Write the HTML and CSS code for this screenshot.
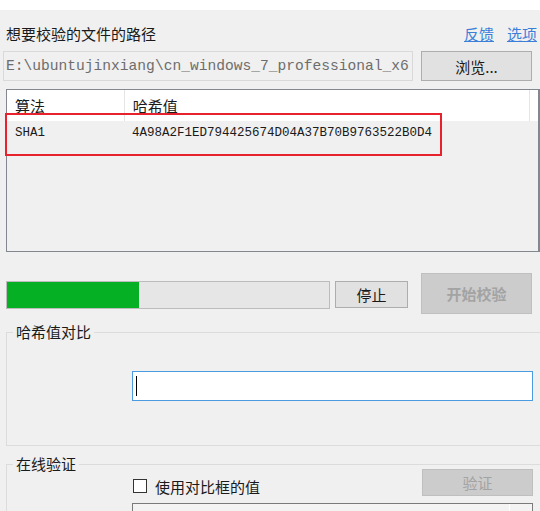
FILE: index.html
```html
<!DOCTYPE html>
<html lang="zh-CN">
<head>
  <meta charset="UTF-8">
  <title>哈希校验</title>
  <link rel="stylesheet" href="styles.css">
</head>
<body>

  <div class="topbar"></div>

  <div class="head-row">
    <span class="title">想要校验的文件的路径</span>
    <div class="links">
      <a href="#" class="link">反馈</a>
      <a href="#" class="link">选项</a>
    </div>
  </div>

  <div class="path-row">
    <div class="path-box">E:\ubuntujinxiang\cn_windows_7_professional_x6</div>
    <button class="btn browse-btn">浏览...</button>
  </div>

  <div class="list">
    <div class="list-head">
      <div class="col col-algo">算法</div>
      <div class="col col-hash">哈希值</div>
      <div class="col col-rest"></div>
    </div>
    <div class="list-row">
      <div class="cell cell-algo">SHA1</div>
      <div class="cell cell-hash">4A98A2F1ED794425674D04A37B70B9763522B0D4</div>
    </div>
    <div class="mark"></div>
  </div>

  <div class="run-row">
    <div class="progress">
      <div class="progress-fill" style="width: 41%"></div>
    </div>
    <button class="btn stop-btn">停止</button>
    <button class="btn start-btn" disabled>开始校验</button>
  </div>

  <div class="group group-compare">
    <div class="group-title">哈希值对比</div>
    <div class="hash-input"><span class="caret"></span></div>
  </div>

  <div class="group group-online">
    <div class="group-title">在线验证</div>
    <div class="check-row">
      <label class="check">
        <span class="check-box"></span>
        使用对比框的值
      </label>
      <button class="btn verify-btn" disabled>验证</button>
    </div>
    <div class="online-box"><span class="online-split"></span></div>
  </div>

</body>
</html>
```

FILE: styles.css
```css
html, body {
  margin: 0;
  padding: 0;
  height: 100%;
  overflow: hidden;
  background: #f0f0f0;
  font-family: "Noto Sans CJK SC", "Liberation Sans", sans-serif;
  font-size: 15px;
  color: #1a1a1a;
}

.topbar {
  height: 10px;
  background: white;
}

.head-row {
  display: flex;
  justify-content: space-between;
  align-items: center;
  height: 20px;
  margin-top: 14px;
  padding: 0 3px 0 6px;
  line-height: 20px;
}

.links {
  display: flex;
  gap: 13px;
}

.link {
  color: #3b7fd8;
  text-decoration: underline;
}

.path-row {
  display: flex;
  height: 30px;
  margin-top: 7px;
  padding-left: 3px;
}

.path-box {
  width: 410px;
  box-sizing: border-box;
  border: 1px solid #d9d9d9;
  background: #f0f0f0;
  color: #6d6d6d;
  font-family: "Liberation Mono", monospace;
  font-size: 14.6px;
  line-height: 28px;
  padding-left: 2px;
  white-space: nowrap;
  overflow: hidden;
}

.btn {
  box-sizing: border-box;
  border: 1px solid #adadad;
  background: #e1e1e1;
  font-family: "Noto Sans CJK SC", "Liberation Sans", sans-serif;
  font-size: 15px;
  color: #1a1a1a;
  padding: 0;
  line-height: 1;
}

.btn:disabled {
  background: #cccccc;
  border-color: #bfbfbf;
  color: #a3a3a3;
}

.browse-btn {
  width: 111px;
  margin-left: 8px;
}

.list {
  position: relative;
  width: 534px;
  height: 163px;
  box-sizing: border-box;
  margin: 8px 0 0 6px;
  border: 1px solid #828790;
  border-right-width: 2px;
}

.list-head {
  display: flex;
  height: 31px;
  background: white;
}

.col {
  line-height: 31px;
  padding-left: 8px;
  box-sizing: border-box;
}

.col-algo {
  width: 118px;
  border-right: 1px solid #e5e5e5;
}

.col-hash {
  width: 406px;
  border-right: 1px solid #e5e5e5;
}

.col-rest {
  flex: 1;
}

.list-row {
  display: flex;
  height: 25px;
  line-height: 25px;
  font-family: "Liberation Mono", monospace;
  font-size: 12.5px;
}

.cell-algo {
  width: 125px;
  padding-left: 8px;
  box-sizing: border-box;
}

.mark {
  position: absolute;
  left: -2px;
  top: 23px;
  width: 437px;
  height: 43px;
  box-sizing: border-box;
  border: 2px solid #e8222c;
}

.run-row {
  display: flex;
  align-items: flex-start;
  height: 41px;
  margin-top: 21px;
  padding-left: 6px;
}

.progress {
  width: 324px;
  height: 28px;
  margin-top: 8px;
  box-sizing: border-box;
  border: 1px solid #bcbcbc;
  background: #e6e6e6;
}

.progress-fill {
  height: 100%;
  background: #06b025;
}

.stop-btn {
  width: 73px;
  height: 27px;
  margin: 8px 0 0 5px;
}

.start-btn {
  width: 111px;
  height: 41px;
  margin-left: 13px;
  font-weight: bold;
}

.group {
  width: 534px;
  box-sizing: border-box;
  margin-left: 6px;
  border: 1px solid #dcdcdc;
  border-right: none;
}

.group-compare {
  margin-top: 18px;
  padding-bottom: 44px;
}

.group-online {
  margin-top: 18px;
  height: 80px;
}

.group-title {
  display: table;
  height: 20px;
  line-height: 20px;
  margin: -11px 0 0 6px;
  padding: 0 3px;
  background: #f0f0f0;
}

.hash-input {
  display: flex;
  align-items: center;
  width: 401px;
  height: 30px;
  box-sizing: border-box;
  margin: 29px 0 0 125px;
  border: 1px solid #4a9be0;
  background: white;
  padding-left: 3px;
}

.caret {
  width: 1px;
  height: 20px;
  background: black;
}

.check-row {
  display: flex;
  justify-content: space-between;
  align-items: flex-start;
  width: 400px;
  height: 27px;
  margin: -5px 0 0 126px;
}

.check {
  display: flex;
  align-items: center;
  gap: 8px;
  margin-top: 7px;
  height: 20px;
}

.check-box {
  width: 14px;
  height: 14px;
  box-sizing: border-box;
  border: 1px solid #333;
  background: white;
}

.verify-btn {
  width: 111px;
  height: 27px;
}

.online-box {
  position: relative;
  width: 401px;
  height: 30px;
  box-sizing: border-box;
  margin: 7px 0 0 125px;
  border: 1px solid #7a7a7a;
  background: #f3f3f3;
}

.online-split {
  position: absolute;
  top: 0;
  bottom: 0;
  right: 22px;
  width: 1px;
  background: white;
}
```
